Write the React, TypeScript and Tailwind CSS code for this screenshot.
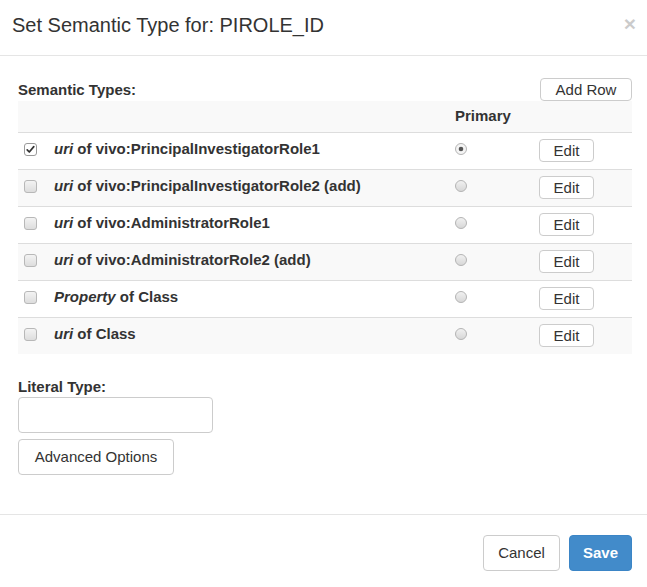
const rows = [
  { em: "uri", rest: " of vivo:PrincipalInvestigatorRole1", checked: true, primary: true },
  { em: "uri", rest: " of vivo:PrincipalInvestigatorRole2 (add)", checked: false, primary: false },
  { em: "uri", rest: " of vivo:AdministratorRole1", checked: false, primary: false },
  { em: "uri", rest: " of vivo:AdministratorRole2 (add)", checked: false, primary: false },
  { em: "Property", rest: " of Class", checked: false, primary: false },
  { em: "uri", rest: " of Class", checked: false, primary: false },
]

export default function App() {
  return (
    <div className="w-[647px] h-[587px] bg-white text-[#333] text-[15px] font-['Liberation_Sans',Arial,sans-serif] flex flex-col">
      {/* Header */}
      <div className="h-[56px] border-b border-[#e5e5e5] flex items-center justify-between pl-[12px] pr-[11px]">
        <h4 className="text-[20px] leading-[26px] text-[#333] -mt-[6px]">Set Semantic Type for: PIROLE_ID</h4>
        <span className="text-[21px] font-bold leading-none text-[#000] opacity-20 -mt-[9px]">×</span>
      </div>

      {/* Body */}
      <div className="h-[458px] px-[18px] pt-[22px]">
        <div className="flex items-end justify-between w-[614px]">
          <span className="font-bold leading-[20px] mb-[1px]">Semantic Types:</span>
          <button className="w-[92px] h-[23px] border border-[#ccc] rounded-[4px] bg-white text-[15px] leading-none text-[#333]">
            Add Row
          </button>
        </div>

        <div className="w-[614px]">
          <div className="h-[31px] bg-[#f9f9f9] grid grid-cols-[36px_401px_84px_1fr] items-center">
            <div />
            <div />
            <div className="font-bold -mt-[1px]">Primary</div>
            <div />
          </div>
          {rows.map((r, i) => (
            <div
              key={i}
              className={`h-[37px] border-t border-[#ddd] grid grid-cols-[36px_401px_84px_1fr] items-center ${i % 2 === 1 ? "bg-[#f9f9f9]" : "bg-white"}`}
            >
              <div className="pl-[6px] flex items-center -mt-[4px]">
                <Checkbox checked={r.checked} />
              </div>
              <div className="font-bold -mt-[4px]">
                <em>{r.em}</em>
                {r.rest}
              </div>
              <div className="-mt-[4px]">
                <Radio checked={r.primary} />
              </div>
              <div>
                <button className="w-[55px] h-[23px] border border-[#ccc] rounded-[4px] bg-white text-[15px] leading-none text-[#333]">
                  Edit
                </button>
              </div>
            </div>
          ))}
        </div>

        <div className="mt-[23px] font-bold leading-[20px]">Literal Type:</div>
        <input className="block w-[195px] h-[36px] border border-[#ccc] rounded-[4px] bg-white outline-none" />
        <button className="mt-[6px] w-[156px] h-[36px] border border-[#ccc] rounded-[4px] bg-white text-[15px] text-[#333]">
          Advanced Options
        </button>
      </div>

      {/* Footer */}
      <div className="border-t border-[#e5e5e5] flex justify-end gap-[9px] pr-[15px] pt-[20px]">
        <button className="w-[77px] h-[36px] border border-[#ccc] rounded-[4px] bg-white text-[15px] text-[#333]">
          Cancel
        </button>
        <button className="w-[63px] h-[36px] border border-[#3b85c6] rounded-[4px] bg-[#428bca] text-[15px] font-bold text-white">
          Save
        </button>
      </div>
    </div>
  )
}

function Checkbox({ checked }: { checked: boolean }) {
  return (
    <svg width="13" height="13" viewBox="0 0 13 13">
      <defs>
        <linearGradient id="cbg" x1="0" y1="0" x2="0" y2="1">
          <stop offset="0" stopColor="#f4f4f4" />
          <stop offset="1" stopColor="#dcdcdc" />
        </linearGradient>
      </defs>
      <rect
        x="0.5"
        y="0.5"
        width="12"
        height="12"
        rx="2.5"
        fill={checked ? "#fff" : "url(#cbg)"}
        stroke={checked ? "#9a9a9a" : "#b8b8b8"}
      />
      {checked && (
        <path d="M3.2 6.8 L5.3 9 L9.8 3.6" fill="none" stroke="#333" strokeWidth="1.7" strokeLinecap="round" strokeLinejoin="round" />
      )}
    </svg>
  )
}

function Radio({ checked }: { checked: boolean }) {
  return (
    <svg width="12" height="12" viewBox="0 0 12 12">
      <defs>
        <linearGradient id="rbg" x1="0" y1="0" x2="0" y2="1">
          <stop offset="0" stopColor="#f2f2f2" />
          <stop offset="1" stopColor="#d6d6d6" />
        </linearGradient>
      </defs>
      <circle cx="6" cy="6" r="5.5" fill={checked ? "#f4f4f4" : "url(#rbg)"} stroke="#b4b4b4" />
      {checked && <circle cx="6" cy="6" r="2.3" fill="#555" />}
    </svg>
  )
}
